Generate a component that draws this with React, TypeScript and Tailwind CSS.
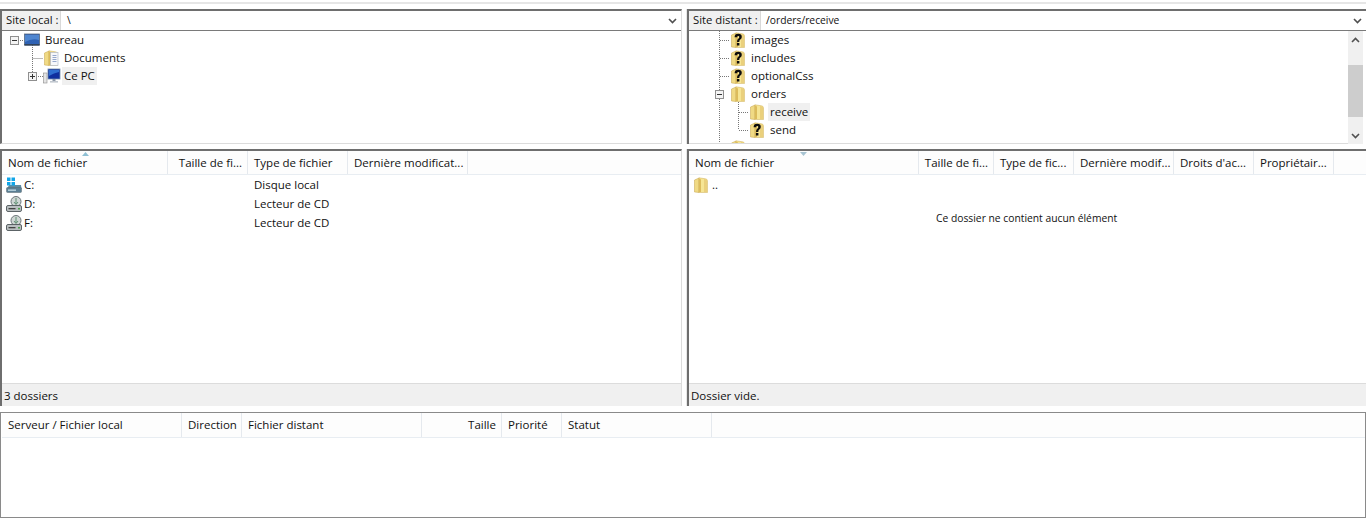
import React from "react";

const Folder = ({ q = false, doc = false }: { q?: boolean; doc?: boolean }) => (
  <svg width="16" height="16" viewBox="0 0 16 16" className="shrink-0">
    <path d="M1.5 3 L6 1 L6 15.5 L1.5 15 Z" fill="#f0da84" stroke="#c4a24a" strokeWidth="0.5" />
    <path d="M6 0.8 L12.5 1.8 Q14.5 2 14.5 4 L14.5 15.5 L6 15.5 Z" fill="#f6e594" stroke="#cfae5a" strokeWidth="0.5" />
    <path d="M6 1.5 L8 2.5 L8 15 L6 15 Z" fill="#dcbc5c" />
    <path d="M11 2 L14 2.5 L14 15 L11 15 Z" fill="#ead07c" />
    {doc && (
      <g>
        <rect x="7.5" y="2.5" width="7.5" height="13" fill="#f7f7fa" stroke="#a9b3c6" strokeWidth="0.6" />
        <path d="M9.5 5.5H13.5M9.5 7.5H13.5M9.5 9.5H13.5M9.5 11.5H13.5" stroke="#7c93c2" strokeWidth="0.8" />
      </g>
    )}
    {q && (
      <path
        d="M4.6 5.2 Q4.6 1.8 8.2 1.8 Q11.8 1.8 11.8 5 Q11.8 6.7 10.1 7.8 Q9.3 8.4 9.3 9.9 L7 9.9 Q7 7.7 8.2 6.8 Q9.3 6 9.3 5.1 Q9.3 4 8.2 4 Q7.1 4 7.1 5.2 Z M6.9 11 H9.4 V13.6 H6.9 Z"
        fill="#0d0d0d"
      />
    )}
  </svg>
);

const Desktop = () => (
  <svg width="16" height="16" viewBox="0 0 16 16" className="shrink-0">
    <rect x="0.5" y="2" width="15" height="11" fill="#2f62b4" stroke="#5a6a80" strokeWidth="0.8" />
    <path d="M1 3H15V8Q8 6 1 10Z" fill="#4f86d0" />
    <rect x="0.5" y="12" width="15" height="1.6" fill="#33445c" />
  </svg>
);

const Pc = () => (
  <svg width="18" height="16" viewBox="0 0 18 16" className="shrink-0">
    <rect x="0.5" y="5" width="3.5" height="10" fill="#e4e4e4" stroke="#8c8c8c" strokeWidth="0.6" />
    <rect x="5" y="1" width="12" height="10" fill="#0f2f9e" stroke="#6f8aac" strokeWidth="0.8" />
    <path d="M6 2H16V4Q11 5 6 8Z" fill="#2f6fd0" />
    <rect x="9.5" y="11" width="3" height="2" fill="#8a96a6" />
    <rect x="7" y="13" width="8" height="1.6" fill="#c2c8d0" />
  </svg>
);

const WinDrive = () => (
  <svg width="16" height="16" viewBox="0 0 16 16" className="shrink-0">
    <path d="M1 12 L3 8 H15 L15.5 12 Z" fill="#5f8aa0" />
    <path d="M1 0.5H4.5V4H1ZM5.5 0.5H9V4H5.5ZM1 5H4.5V8.5H1ZM5.5 5H9V8.5H5.5Z" fill="#11a5e8" />
    <rect x="0.5" y="10.5" width="15" height="5" rx="1" fill="#5a7f94" stroke="#5a6a70" strokeWidth="0.5" />
    <rect x="2" y="12.5" width="8" height="1.3" fill="#c4dce6" />
  </svg>
);

const CdDrive = () => (
  <svg width="16" height="16" viewBox="0 0 16 16" className="shrink-0">
    <circle cx="10" cy="5.5" r="5" fill="#cfd6d4" stroke="#6c7679" strokeWidth="1" />
    <path d="M10 2V8M8 6L10 8.5L12 6" stroke="#5f8f72" fill="none" />
    <rect x="0.5" y="9.5" width="15" height="6" rx="1.5" fill="#b9bfc0" stroke="#5c6366" strokeWidth="1" />
    <rect x="2.5" y="12" width="7" height="1.3" fill="#444" />
    <rect x="12" y="12" width="2" height="1.5" fill="#4aa04a" />
  </svg>
);

const Expander = ({ open }: { open: boolean }) => (
  <svg width="9" height="9" viewBox="0 0 9 9" className="shrink-0">
    <rect x="0.5" y="0.5" width="8" height="8" fill="#f4f4f4" stroke="#8f8f8f" />
    <path d="M2 4.5H7" stroke="#333" />
    {!open && <path d="M4.5 2V7" stroke="#333" />}
  </svg>
);

const Chevron = ({ up = false }: { up?: boolean }) => (
  <svg width="9" height="6" viewBox="0 0 9 6" className="shrink-0">
    <path d={up ? "M1 5 L4.5 1.5 L8 5" : "M1 1 L4.5 4.5 L8 1"} fill="none" stroke="#505050" strokeWidth="1.6" />
  </svg>
);

const Sort = ({ down = false }: { down?: boolean }) => (
  <svg width="7" height="4" viewBox="0 0 7 4" className="block">
    <path d={down ? "M0 0 L3.5 4 L7 0 Z" : "M0 4 L3.5 0 L7 4 Z"} fill={down ? "#a8c4d2" : "#8fc0d4"} />
  </svg>
);

const PathBar = ({ label, labelW, value, valuePad }: { label: string; labelW: string; value: string; valuePad: string }) => (
  <div className="flex h-[20px] shrink-0 items-stretch border-b border-[#7a7a7a] bg-white">
    <div className={`${labelW} flex shrink-0 items-center whitespace-nowrap border-r border-[#d9d9d9] bg-[#f0f0f0] pl-[4px] text-[11.3px]`}>{label}</div>
    <div className={`${valuePad} flex flex-1 items-center text-[10.3px]`}>{value}</div>
    <div className="flex w-[18px] shrink-0 items-center justify-center">
      <Chevron />
    </div>
  </div>
);

const Row = ({
  pad,
  icon,
  label,
  selected = false,
}: {
  pad: string;
  icon: React.ReactNode;
  label: string;
  selected?: boolean;
}) => (
  <div className={`${pad} flex h-[18px] items-center`}>
    <div className="flex w-[16px] shrink-0 items-center justify-center">{icon}</div>
    <span className={`ml-[3px] px-[2px] leading-[18px] ${selected ? "bg-[#f0f0f0]" : ""}`}>{label}</span>
  </div>
);

const Header = ({
  cols,
  h = "h-[24px]",
}: {
  cols: { t: string; w: string; right?: boolean }[];
  h?: string;
}) => (
  <div className={`${h} flex shrink-0 border-b border-[#e8edf2] bg-[#fdfdfd]`}>
    {cols.map((c) => (
      <div
        key={c.t}
        className={`${c.w} flex shrink-0 items-center truncate border-r border-[#e5e9ee] px-[5px] ${c.right ? "justify-end" : "pl-[6px]"}`}
      >
        {c.t}
      </div>
    ))}
  </div>
);

const FileRow = ({ icon, name, type }: { icon: React.ReactNode; name: string; type?: string }) => (
  <div className="flex h-[19px] items-center">
    <div className="flex w-[166px] items-center pl-[4px]">
      {icon}
      <span className="ml-[2px]">{name}</span>
    </div>
    <div className="w-[80px]" />
    <div className="pl-[6px]">{type}</div>
  </div>
);

export default function App() {
  return (
    <div
      className="flex h-[518px] w-[1366px] flex-col overflow-hidden bg-white text-[11.5px] text-[#111]"
      style={{ fontFamily: '"Open Sans", "Noto Sans", sans-serif' }}
    >
      <div className="h-[9px] shrink-0 bg-white pt-[2px]">
        <div className="h-[2px] bg-[#e6e6e6]" />
      </div>

      <div className="flex h-[135px] shrink-0 gap-[5px]">
        <div className="flex w-[682px] flex-col border-t-2 border-r border-b border-l-2 border-[#6e6e6e] border-r-[#dcdcdc] border-b-[#dcdcdc]">
          <PathBar label="Site local :" labelW="w-[59px]" value="\" valuePad="pl-[6px]" />
          <div className="relative flex-1 overflow-hidden">
            <svg width="60" height="60" className="absolute top-0 left-0">
              <path d="M12 9.5H22M30.5 14V45M30.5 27.5H41M36 45.5H41" stroke="#777" strokeDasharray="1 1" fill="none" />
            </svg>
            <div className="relative">
              <div className="flex h-[18px] items-center pl-[8px]">
                <Expander open />
                <div className="ml-[5px]"><Desktop /></div>
                <span className="ml-[5px]">Bureau</span>
              </div>
              <Row pad="pl-[41px]" icon={<Folder doc />} label="Documents" />
              <div className="flex h-[18px] items-center pl-[26px]">
                <Expander open={false} />
                <div className="ml-[6px]"><Pc /></div>
                <span className="ml-[1px] bg-[#f0f0f0] px-[2px] leading-[18px]">Ce PC</span>
              </div>
            </div>
          </div>
        </div>

        <div className="flex flex-1 flex-col border-t-2 border-l-2 border-[#6e6e6e] shadow-[-1px_0_0_#e6e6e6]">
          <PathBar label="Site distant :" labelW="w-[72px]" value="/orders/receive" valuePad="pl-[5px]" />
          <div className="flex min-h-0 flex-1 pr-[3px]">
            <div className="relative flex-1 overflow-hidden border-b border-[#dcdcdc]">
              <svg width="80" height="112" className="absolute top-0 left-0">
                <path d="M30.5 0V112M31 9.5H41M31 27.5H41M31 45.5H41M49.5 71V99M50 81.5H60M50 99.5H60" stroke="#777" strokeDasharray="1 1" fill="none" />
              </svg>
              <div className="relative">
                <Row pad="pl-[41px]" icon={<Folder q />} label="images" />
                <Row pad="pl-[41px]" icon={<Folder q />} label="includes" />
                <Row pad="pl-[41px]" icon={<Folder q />} label="optionalCss" />
                <div className="flex h-[18px] items-center pl-[26px]">
                  <Expander open />
                  <div className="ml-[6px] w-[16px]"><Folder /></div>
                  <span className="ml-[5px]">orders</span>
                </div>
                <Row pad="pl-[60px]" icon={<Folder />} label="receive" selected />
                <Row pad="pl-[60px]" icon={<Folder q />} label="send" />
                <Row pad="pl-[41px]" icon={<Folder />} label="" />
              </div>
            </div>
            <div className="flex w-[15px] shrink-0 flex-col bg-[#f0f0f0]">
              <div className="flex h-[17px] items-center justify-center"><Chevron up /></div>
              <div className="h-[17px]" />
              <div className="h-[52px] bg-[#cdcdcd]" />
              <div className="flex-1" />
              <div className="flex h-[17px] items-center justify-center"><Chevron /></div>
            </div>
          </div>
        </div>
      </div>

      <div className="flex h-[262px] shrink-0 gap-[5px] pt-[5px]">
        <div className="flex w-[682px] flex-col border-t-2 border-r border-l-2 border-[#6e6e6e] border-r-[#dcdcdc]">
          <div className="relative">
            <Header
              cols={[
                { t: "Nom de fichier", w: "w-[166px]" },
                { t: "Taille de fi...", w: "w-[80px]", right: true },
                { t: "Type de fichier", w: "w-[100px]" },
                { t: "Dernière modificat...", w: "w-[120px]" },
              ]}
            />
            <div className="absolute top-[1px] left-[80px]"><Sort /></div>
          </div>
          <div className="flex-1">
            <FileRow icon={<WinDrive />} name="C:" type="Disque local" />
            <FileRow icon={<CdDrive />} name="D:" type="Lecteur de CD" />
            <FileRow icon={<CdDrive />} name="F:" type="Lecteur de CD" />
          </div>
          <div className="flex h-[23px] shrink-0 items-center border-t border-[#dcdcdc] bg-[#f0f0f0] pt-[1px] pl-[2px]">3 dossiers</div>
        </div>

        <div className="flex flex-1 flex-col border-t-2 border-l-2 border-[#6e6e6e] shadow-[-1px_0_0_#e6e6e6]">
          <div className="relative">
            <Header
              cols={[
                { t: "Nom de fichier", w: "w-[230px]" },
                { t: "Taille de fi...", w: "w-[75px]", right: true },
                { t: "Type de fic...", w: "w-[80px]" },
                { t: "Dernière modif...", w: "w-[100px]" },
                { t: "Droits d'ac...", w: "w-[80px]" },
                { t: "Propriétair...", w: "w-[80px]" },
              ]}
            />
            <div className="absolute top-[1px] left-[111px]"><Sort down /></div>
          </div>
          <div className="flex h-[19px] items-center pl-[4px]">
            <Folder />
            <span className="ml-[3px]">..</span>
          </div>
          <div className="flex-1 pt-[17px] pl-[247px] text-[10.3px]">Ce dossier ne contient aucun élément</div>
          <div className="flex h-[23px] shrink-0 items-center border-t border-[#dcdcdc] bg-[#f0f0f0] pt-[1px] pl-[2px]">Dossier vide.</div>
        </div>
      </div>

      <div className="mt-[6px] flex flex-1 flex-col border border-[#8a8a8a] pl-[1px]">
        <Header
          cols={[
            { t: "Serveur / Fichier local", w: "w-[180px]" },
            { t: "Direction", w: "w-[60px]" },
            { t: "Fichier distant", w: "w-[180px]" },
            { t: "Taille", w: "w-[80px]", right: true },
            { t: "Priorité", w: "w-[60px]" },
            { t: "Statut", w: "w-[150px]" },
          ]}
          h="h-[25px]"
        />
      </div>
    </div>
  );
}
